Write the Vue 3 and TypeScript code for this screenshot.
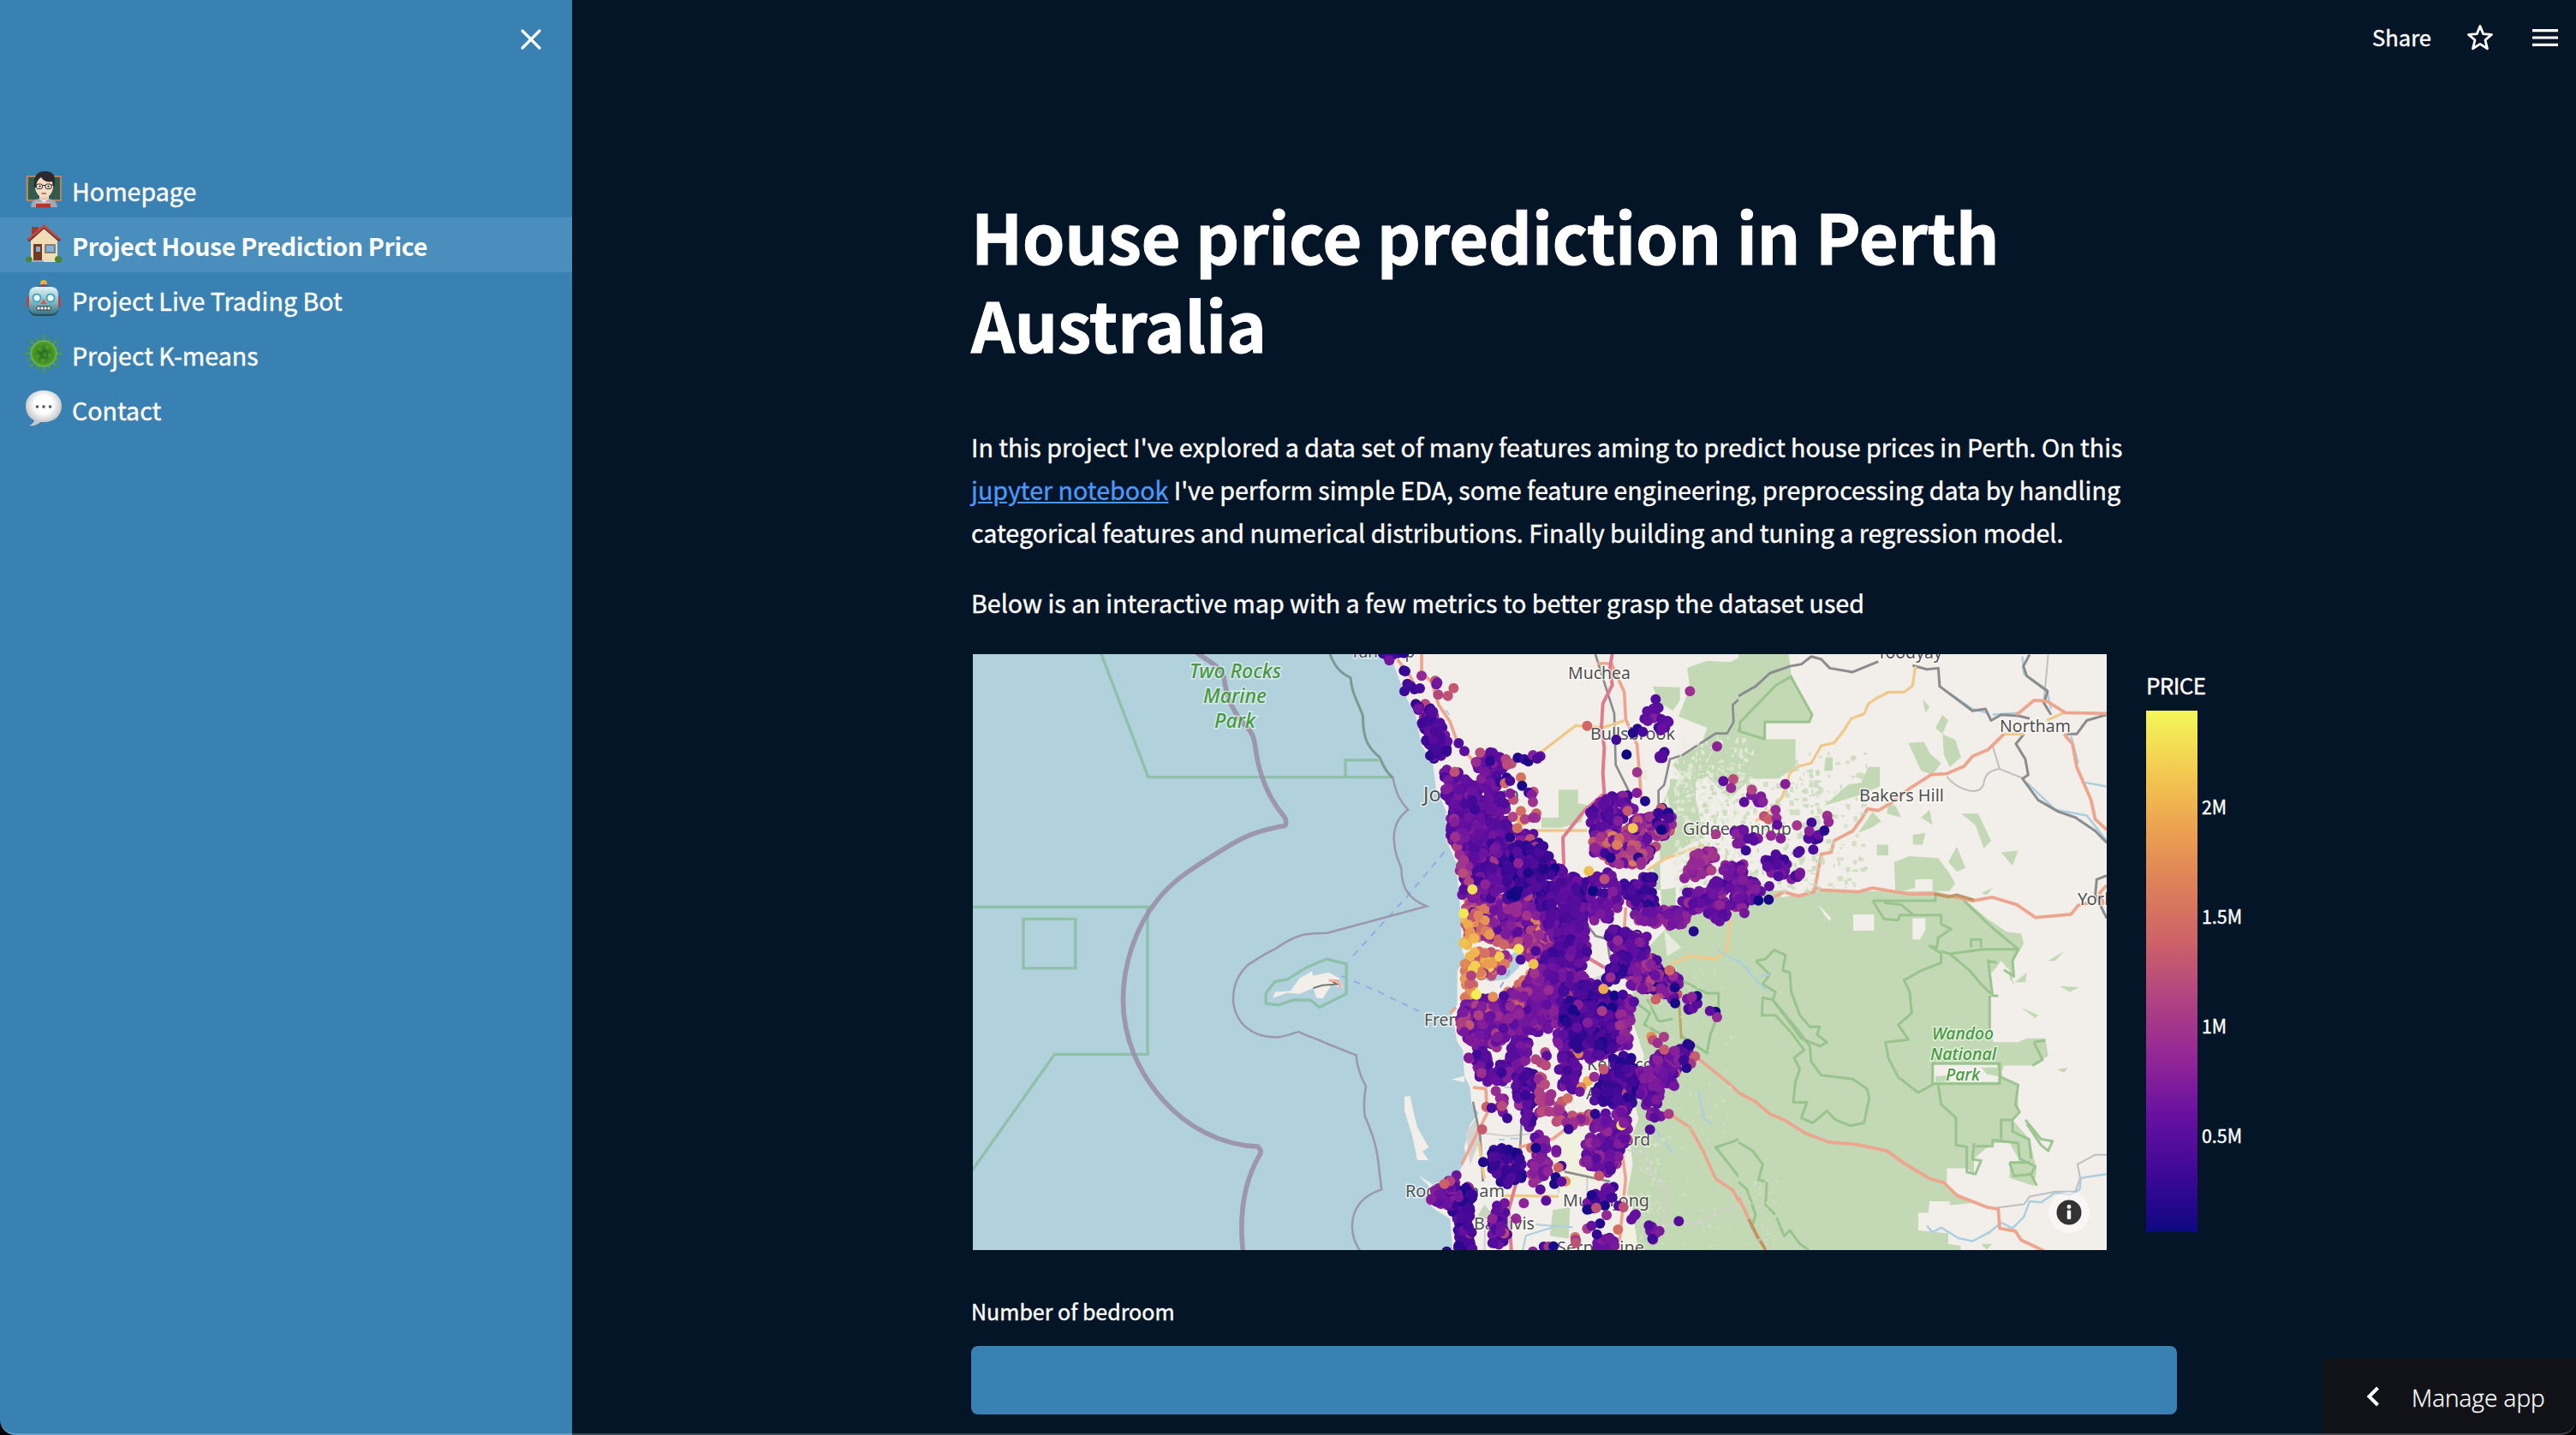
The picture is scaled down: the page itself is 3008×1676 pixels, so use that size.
<script setup lang="ts">
type Pt = [number, number]
type Rgb = [number, number, number]
interface Area { pts: Pt[]; price: number; spread?: number; density?: number }
interface Dot { x: number; y: number; c: string }
interface Label { t: string; x: number; y: number; w: number; s: number; park?: boolean }

const navItems = [
  { label: 'Homepage', icon: 'teacher' },
  { label: 'Project House Prediction Price', icon: 'house', active: true },
  { label: 'Project Live Trading Bot', icon: 'robot' },
  { label: 'Project K-means', icon: 'microbe' },
  { label: 'Contact', icon: 'speech' },
]

const plasma: Rgb[] = [
  [13, 8, 130], [62, 8, 150], [102, 16, 160], [146, 38, 150], [176, 66, 130],
  [204, 98, 104], [222, 128, 90], [236, 163, 80], [243, 204, 80], [243, 248, 88],
]
const shade = (v: number): string => {
  const t = Math.max(0, Math.min(0.999, v)) * 9
  const i = Math.floor(t)
  const f = t - i
  const a = plasma[i]
  const b = plasma[i + 1]
  return `rgb(${a.map((n, k) => Math.round(n + (b[k] - n) * f)).join(',')})`
}
const stops = plasma.map((c, i) => ({ o: i / (plasma.length - 1), c: `rgb(${c.join(',')})` }))

let seed = 20231
const rnd = () => {
  seed = (seed * 1664525 + 1013904223) % 4294967296
  return seed / 4294967296
}
const inside = (x: number, y: number, p: Pt[]) => {
  let r = false
  for (let i = 0, j = p.length - 1; i < p.length; j = i++) {
    if (p[i][1] > y !== p[j][1] > y && x < ((p[j][0] - p[i][0]) * (y - p[i][1])) / (p[j][1] - p[i][1]) + p[i][0]) r = !r
  }
  return r
}

// Suburb clusters, in thirds of a pixel from the grid origin (1560, 760)
const areas: Area[] = [
  { price: 0.15, pts: [[275, 185], [330, 188], [365, 240], [393, 300], [395, 365], [350, 380], [325, 360], [308, 310], [300, 250]] },
  { price: 0.62, spread: 0.5, density: 190, pts: [[452, 1100], [480, 1050], [590, 1060], [602, 1085], [570, 1120], [545, 1160], [520, 1140], [480, 1130], [490, 1210], [450, 1220], [446, 1150]] },
  { price: 0.6, spread: 0.5, density: 400, pts: [[590, 1190], [650, 1160], [700, 1090], [720, 1140], [680, 1240], [620, 1240]] },
  { price: 0.46, spread: 0.42, density: 170, pts: [[452, 860], [560, 870], [700, 850], [745, 940], [740, 985], [680, 1020], [600, 1030], [500, 1010], [455, 1010]] },
  { price: 0.7, spread: 0.35, density: 500, pts: [[447, 900], [520, 920], [540, 1010], [500, 1010], [452, 1040]] },
  { price: 0.28, spread: 0.2, density: 450, pts: [[520, 860], [740, 850], [745, 980], [600, 1000]] },
  { price: 0.4, spread: 0.3, density: 200, pts: [[680, 1000], [740, 960], [790, 1040], [700, 1110], [660, 1060]] },
  { price: 0.2, pts: [[375, 420], [430, 420], [455, 450], [482, 440], [500, 480], [515, 500], [500, 440], [490, 400], [515, 360], [565, 360], [595, 395], [565, 440], [570, 500], [603, 545], [600, 600], [620, 640], [690, 640], [712, 700], [795, 755], [798, 785], [705, 790], [700, 850], [640, 870], [450, 870], [440, 740], [402, 670], [403, 600], [403, 540], [372, 480]] },
  { price: 0.34, spread: 0.28, density: 900, pts: [[400, 560], [450, 700], [560, 860], [440, 860], [435, 740], [400, 665]] },
  { price: 0.1, density: 420, pts: [[600, 700], [700, 660], [790, 770], [700, 820], [620, 880], [580, 800]] },
  { price: 0.17, pts: [[700, 830], [740, 825], [810, 790], [880, 790], [930, 830], [880, 870], [870, 940], [880, 1030], [870, 1100], [800, 1160], [720, 1130], [690, 1110], [720, 1060], [780, 1030], [740, 960], [720, 900]] },
  { price: 0.25, density: 170, pts: [[445, 1240], [500, 1235], [600, 1225], [655, 1190], [690, 1110], [760, 1110], [880, 1140], [925, 1200], [1025, 1230], [1022, 1300], [1030, 1380], [980, 1400], [935, 1420], [870, 1430], [800, 1400], [765, 1350], [820, 1310], [770, 1320], [720, 1350], [690, 1345], [630, 1345], [600, 1355], [570, 1390], [490, 1390], [445, 1350], [433, 1300]] },
  { price: 0.13, density: 300, pts: [[780, 1170], [900, 1150], [1000, 1250], [1020, 1370], [930, 1420], [800, 1380]] },
  { price: 0.33, spread: 0.24, density: 900, pts: [[445, 1240], [760, 1150], [740, 1300], [480, 1300], [450, 1360], [433, 1300]] },
  { price: 0.2, pts: [[462, 1410], [510, 1400], [550, 1440], [600, 1440], [615, 1370], [640, 1345], [685, 1380], [665, 1450], [630, 1480], [590, 1510], [530, 1510], [480, 1485]] },
  { price: 0.16, pts: [[635, 1460], [700, 1480], [715, 1560], [690, 1600], [695, 1670], [665, 1670], [660, 1600], [635, 1610], [630, 1500]] },
  { price: 0.42, spread: 0.25, density: 330, pts: [[710, 1480], [760, 1550], [735, 1600], [790, 1570], [800, 1620], [900, 1620], [900, 1670], [830, 1670], [740, 1640], [715, 1680]] },
  { price: 0.18, pts: [[790, 1410], [850, 1430], [840, 1500], [865, 1540], [790, 1530], [775, 1450]] },
  { price: 0.12, density: 170, pts: [[960, 1430], [1030, 1410], [1050, 1480], [1060, 1550], [1020, 1610], [960, 1600], [930, 1570], [895, 1575], [930, 1500]] },
  { price: 0.24, density: 180, pts: [[920, 1630], [1020, 1600], [1025, 1680], [1015, 1740], [965, 1830], [910, 1810], [865, 1800], [880, 1720]] },
  { price: 0.24, density: 230, pts: [[1060, 1460], [1140, 1410], [1190, 1390], [1240, 1380], [1240, 1430], [1200, 1450], [1190, 1530], [1130, 1510], [1135, 1580], [1140, 1635], [1110, 1640], [1070, 1580]] },
  { price: 0.25, spread: 0.3, pts: [[995, 1060], [1095, 1050], [1140, 1110], [1200, 1130], [1215, 1170], [1185, 1225], [1140, 1200], [1070, 1190], [1035, 1170]] },
  { price: 0.2, pts: [[960, 975], [1020, 985], [1090, 1000], [1105, 1050], [1070, 1075], [1000, 1070], [950, 1010]] },
  { price: 0.12, pts: [[960, 1110], [985, 1060], [1020, 1070], [1015, 1150], [940, 1160]] },
  { price: 0.3, density: 450, pts: [[985, 1220], [1040, 1220], [1025, 1370], [1000, 1370]] },
  { price: 0.2, pts: [[890, 560], [935, 515], [980, 505], [1030, 510], [1045, 550], [1000, 600], [1000, 650], [900, 650], [885, 610]] },
  { price: 0.36, spread: 0.42, pts: [[1050, 580], [1100, 580], [1145, 545], [1178, 570], [1180, 625], [1135, 660], [1095, 720], [1080, 755], [1000, 750], [955, 745], [900, 710], [900, 645], [1000, 640]] },
  { price: 0.16, density: 600, pts: [[1140, 540], [1180, 570], [1180, 625], [1130, 660], [1110, 600]] },
  { price: 0.14, pts: [[1010, 810], [1060, 790], [1110, 790], [1110, 840], [1130, 900], [1110, 940], [1045, 910], [1010, 860]] },
  { price: 0.27, pts: [[1035, 930], [1120, 900], [1190, 905], [1240, 930], [1215, 965], [1165, 970], [1090, 960]] },
  { price: 0.22, density: 280, pts: [[895, 800], [915, 770], [970, 780], [990, 830], [990, 910], [950, 945], [900, 940], [875, 880]] },
  { price: 0.24, density: 240, pts: [[1210, 840], [1260, 845], [1310, 830], [1350, 770], [1370, 745], [1430, 745], [1440, 800], [1500, 825], [1470, 870], [1435, 920], [1400, 900], [1340, 960], [1300, 915], [1220, 905]] },
  { price: 0.2, density: 300, pts: [[1490, 730], [1570, 705], [1590, 780], [1660, 765], [1600, 800], [1560, 800], [1510, 760]] },
  { price: 0.34, density: 320, pts: [[1240, 705], [1330, 695], [1340, 720], [1300, 790], [1220, 800], [1210, 770], [1250, 740]] },
  { price: 0.24, density: 380, pts: [[1395, 620], [1450, 610], [1480, 660], [1440, 690], [1380, 660]] },
  { price: 0.13, density: 150, pts: [[400, 1870], [430, 1880], [475, 1880], [478, 1930], [470, 2000], [478, 2110], [425, 2110], [425, 2000], [390, 1940]] },
  { price: 0.24, pts: [[340, 1880], [420, 1845], [430, 1920], [395, 1950], [335, 1945]] },
  { price: 0.09, density: 160, pts: [[542, 1750], [615, 1745], [660, 1775], [655, 1850], [595, 1870], [548, 1840]] },
  { price: 0.27, density: 280, pts: [[700, 1690], [740, 1710], [740, 1830], [715, 1870], [670, 1850], [690, 1760]] },
  { price: 0.18, density: 300, pts: [[560, 1940], [600, 1935], [585, 2010], [615, 2050], [570, 2090], [540, 2080], [540, 2020]] },
  { price: 0.22, density: 300, pts: [[1075, 240], [1120, 180], [1150, 230], [1175, 255], [1150, 300], [1120, 250]] },
  { price: 0.18, density: 250, pts: [[1125, 365], [1160, 345], [1160, 380], [1140, 395]] },
  { price: 0.2, density: 420, pts: [[870, 1940], [930, 1870], [980, 1880], [950, 1960], [870, 1955]] },
  { price: 0.24, density: 320, pts: [[900, 2090], [950, 2040], [990, 2045], [985, 2085], [940, 2105]] },
  { price: 0.22, density: 320, pts: [[1090, 2000], [1140, 2025], [1110, 2065], [1090, 2045]] },
  { price: 0.2, density: 320, pts: [[1230, 1210], [1290, 1230], [1250, 1270], [1220, 1250]] },
  { price: 0.28, density: 350, pts: [[560, 1570], [590, 1560], [600, 1640], [570, 1620]] },
  { price: 0.17, density: 320, pts: [[1650, 650], [1700, 640], [1690, 665], [1600, 660]] },
  { price: 0.22, density: 320, pts: [[1440, 510], [1500, 505], [1500, 535], [1450, 525]] },
]
// x, y, price
const singles: [number, number, number][] = [
  [165, 10, 0.08], [180, 18, 0.15], [200, 14, 0.13], [218, 8, 0.1], [187, 34, 0.25], [238, 8, 0.06], [238, 70, 0.05], [243, 72, 0.1], [300, 88, 0.34],
  [348, 105, 0.52], [352, 118, 0.22], [355, 112, 0.25], [412, 131, 0.52], [358, 154, 0.46], [392, 158, 0.5], [240, 142, 0.1],
  [250, 116, 0.12], [262, 124, 0.14], [275, 135, 0.1], [294, 132, 0.14], [430, 324, 0.16], [450, 352, 0.2], [490, 390, 0.36],
  [540, 386, 0.08], [575, 375, 0.2], [595, 380, 0.45], [615, 395, 0.5], [600, 400, 0.48], [637, 375, 0.05], [660, 380, 0.1], [674, 388, 0.03],
  [690, 366, 0.3], [716, 370, 0.2], [705, 378, 0.15], [575, 460, 0.1], [598, 445, 0.08], [592, 464, 0.58], [610, 456, 0.14],
  [648, 444, 0.62], [652, 473, 0.03], [692, 494, 0.5], [675, 497, 0.12], [686, 505, 0.3], [622, 522, 0.5], [610, 500, 0.3], [690, 530, 0.38],
  [702, 570, 0.55], [700, 585, 0.4], [648, 562, 0.6], [620, 582, 0.45], [652, 595, 0.82], [662, 590, 0.45], [690, 585, 0.36],
  [635, 622, 0.6], [610, 654, 0.06], [505, 357, 0.48], [880, 263, 0.58], [1240, 142, 0.37], [1335, 335, 0.32],
  [1357, 457, 0.2], [1392, 450, 0.48], [1384, 481, 0.34], [1018, 364, 0.0], [1055, 426, 0.38], [1054, 498, 0.3],
  [1083, 527, 0.04], [982, 312, 0.12], [1040, 288, 0.06], [1056, 274, 0.06], [1075, 284, 0.14], [1090, 212, 0.2],
  [1120, 170, 0.17], [1130, 200, 0.19], [1165, 250, 0.2], [1331, 643, 0.42], [1253, 983, 0.05], [1040, 622, 0.88], [984, 680, 0.66],
  [962, 725, 0.05], [1140, 628, 0.0], [900, 842, 0.0], [640, 1045, 0.95], [447, 920, 0.96], [448, 1025, 0.86],
  [478, 836, 0.94], [886, 772, 0.85], [1574, 467, 0.3], [1457, 487, 0.45], [1540, 558, 0.34],
  [1500, 580, 0.5], [1515, 590, 0.55], [1543, 587, 0.35], [1546, 610, 0.2], [1524, 648, 0.34], [1558, 658, 0.3],
  [1615, 612, 0.4], [1666, 602, 0.12], [1658, 632, 0.3], [1721, 578, 0.37], [1726, 600, 0.34], [1711, 630, 0.06],
  [1672, 697, 0.15], [1625, 702, 0.16], [1618, 708, 0.15], [1516, 872, 0.02], [1480, 875, 0.01], [1518, 825, 0.2],
  [1626, 778, 0.28], [1625, 785, 0.26], [1430, 530, 0.2], [1436, 700, 0.1],
  [1168, 1120, 0.58], [1120, 1222, 0.55], [1188, 1235, 0.02], [1187, 1180, 0.03], [1265, 1210, 0.02], [1247, 1213, 0.32], [1330, 1265, 0.02],
  [1335, 1284, 0.34], [1310, 1262, 0.2], [975, 1208, 0.01], [1005, 1205, 0.12], [1044, 1230, 0.17], [937, 1185, 0.8],
  [1105, 1352, 0.72], [1110, 1364, 0.5], [1127, 1375, 0.36], [1149, 1353, 0.42], [1150, 1398, 0.52], [1232, 1378, 0.05],
  [1240, 1383, 0.06], [1258, 1421, 0.54], [1244, 1447, 0.4], [1228, 1462, 0.05], [1218, 1435, 0.1], [1166, 1623, 0.42], [1100, 1678, 0.17],
  [1185, 1525, 0.26], [733, 1407, 0.45], [738, 1420, 0.2], [718, 1443, 0.45], [735, 1453, 0.48], [700, 1432, 0.45],
  [882, 1508, 0.82], [860, 1530, 0.65], [812, 1568, 0.6], [854, 1545, 0.25], [905, 1493, 0.35], [938, 1467, 0.52],
  [560, 1543, 0.35], [575, 1568, 0.34], [582, 1595, 0.48], [527, 1598, 0.55], [545, 1602, 0.14], [600, 1638, 0.1],
  [512, 1677, 0.53], [1000, 1663, 0.97], [1008, 1655, 0.3], [908, 1623, 0.06], [815, 1676, 0.1], [684, 1742, 0.6], [700, 1742, 0.02],
  [772, 1758, 0.3], [772, 1750, 0.26], [516, 1792, 0.04], [790, 1805, 0.14], [779, 1811, 0.55], [770, 1845, 0.02],
  [765, 1868, 0.03], [804, 1859, 0.72], [790, 1860, 0.2], [716, 1888, 0.18], [736, 1927, 0.2], [658, 1936, 0.32],
  [631, 1990, 0.34], [548, 1990, 0.32], [922, 1840, 0.52], [896, 1908, 0.04], [880, 1958, 0.02], [942, 1944, 0.02],
  [990, 1945, 0.15], [1007, 1950, 0.5], [912, 1952, 0.5], [948, 1978, 0.34], [1045, 1980, 0.25], [1035, 1993, 0.22],
  [1050, 1975, 0.22], [1201, 1999, 0.18], [925, 2007, 0.06], [880, 2025, 0.42], [895, 2015, 0.22], [914, 2045, 0.08],
  [988, 2028, 0.6], [838, 2055, 0.6], [840, 2065, 0.4], [840, 2075, 0.5], [728, 2088, 0.15], [745, 2088, 0.4],
  [762, 2087, 0.02], [690, 2105, 0.32], [388, 2105, 0.06], [422, 1838, 0.24], [400, 1858, 0.45], [380, 1868, 0.55],
  [647, 1082, 0.15], [700, 1052, 0.14], [692, 1098, 0.85], [580, 1120, 0.3], [492, 1205, 0.98], [550, 1213, 0.72],
  [522, 1060, 0.62], [932, 1262, 0.42],
]
const dots: Dot[] = []
for (const a of areas) {
  const xs = a.pts.map((p) => p[0])
  const ys = a.pts.map((p) => p[1])
  const x0 = Math.min(...xs)
  const x1 = Math.max(...xs)
  const y0 = Math.min(...ys)
  const y1 = Math.max(...ys)
  const tries = Math.round((((x1 - x0) * (y1 - y0)) / (a.density ?? 190)) * 1.25)
  for (let i = 0; i < tries; i++) {
    const x = x0 + rnd() * (x1 - x0)
    const y = y0 + rnd() * (y1 - y0)
    if (!inside(x, y, a.pts)) continue
    const n = (rnd() + rnd() + rnd()) / 1.5 - 1
    const outlier = rnd() < 0.025 ? rnd() * 0.35 : 0
    dots.push({ x: x + (rnd() - 0.5) * 10, y: y + (rnd() - 0.5) * 10, c: shade(a.price + n * (a.spread ?? 0.14) + outlier) })
  }
}
for (const [x, y, p] of singles) dots.push({ x, y, c: shade(p) })

// Scrub texture of the hills
const specks: { x: number; y: number; w: number; h: number; c: string }[] = []
const speckle = (x0: number, y0: number, x1: number, y1: number, n: number, c: string, m: number) => {
  for (let i = 0; i < n; i++) {
    specks.push({ x: x0 + rnd() * (x1 - x0), y: y0 + rnd() * (y1 - y0), w: 3 + rnd() * m, h: 3 + rnd() * m, c })
  }
}
speckle(1190, 300, 1460, 560, 200, '#e9ecdd', 12)
speckle(1180, 400, 1420, 850, 300, '#e2e9d4', 14)
speckle(1200, 450, 1700, 850, 320, '#c5dab8', 18)
speckle(1600, 350, 1860, 830, 120, '#c5dab8', 18)
speckle(1080, 1100, 1380, 2090, 200, '#cfdfc2', 9)
speckle(1420, 1850, 1560, 2090, 50, '#d2e0c5', 9)
speckle(1060, 1700, 1150, 2080, 70, '#d6e2c9', 10)

const labels: Label[] = [
  { t: 'Yanchep', x: 1577, y: 768, w: 75, s: 20 },
  { t: 'Muchea', x: 1831, y: 793, w: 73, s: 20 },
  { t: 'Bullsbrook', x: 1857, y: 864, w: 99, s: 20 },
  { t: 'Joondalup', x: 1662, y: 936, w: 112, s: 24 },
  { t: 'Gidgegannup', x: 1965, y: 975, w: 127, s: 20 },
  { t: 'Bakers Hill', x: 2171, y: 936, w: 99, s: 20 },
  { t: 'Northam', x: 2335, y: 855, w: 83, s: 20 },
  { t: 'Toodyay', x: 2192, y: 769, w: 76, s: 20 },
  { t: 'York', x: 2426, y: 1057, w: 42, s: 20 },
  { t: 'Perth', x: 1778, y: 1115, w: 60, s: 25 },
  { t: 'Fremantle', x: 1663, y: 1198, w: 92, s: 20 },
  { t: 'Kelmscott', x: 1853, y: 1250, w: 92, s: 20 },
  { t: 'Armadale', x: 1852, y: 1284, w: 90, s: 20 },
  { t: 'Byford', x: 1867, y: 1338, w: 60, s: 20 },
  { t: 'Rockingham', x: 1641, y: 1398, w: 116, s: 20 },
  { t: 'Baldivis', x: 1721, y: 1436, w: 71, s: 20 },
  { t: 'Mundijong', x: 1825, y: 1409, w: 101, s: 20 },
  { t: 'Serpentine', x: 1818, y: 1464, w: 102, s: 20 },
  { t: 'Two Rocks', x: 1389, y: 792, w: 107, s: 23, park: true },
  { t: 'Marine', x: 1405, y: 821, w: 74, s: 23, park: true },
  { t: 'Park', x: 1418, y: 850, w: 48, s: 23, park: true },
  { t: 'Wandoo', x: 2256, y: 1214, w: 72, s: 19, park: true },
  { t: 'National', x: 2254, y: 1238, w: 77, s: 19, park: true },
  { t: 'Park', x: 2272, y: 1262, w: 40, s: 19, park: true },
]
const ticks = [
  { t: '2M', y: 951, w: 29 }, { t: '1.5M', y: 1079, w: 47 }, { t: '1M', y: 1207, w: 29 }, { t: '0.5M', y: 1335, w: 47 },
]
const spikes = Array.from({ length: 16 }, (_, i) => {
  const a = (i * Math.PI) / 8
  const r = i % 2 ? 18.5 : 21
  return { x: 22 + Math.cos(a) * r, y: 22 + Math.sin(a) * r, ix: 22 + Math.cos(a) * 14, iy: 22 + Math.sin(a) * 14 }
})
</script>

<template>
  <div class="app">
    <aside class="sidebar">
      <div class="side-head">
        <svg width="26" height="26" viewBox="0 0 26 26"><path d="M3 3 23 23M23 3 3 23" stroke="#fff" stroke-width="3.200" stroke-linecap="round" /></svg>
      </div>
      <nav>
        <a v-for="n in navItems" :key="n.label" class="nav-item" :class="{ active: n.active }">
          <svg class="emoji" width="44" height="44" viewBox="0 0 44 44">
            <g v-if="n.icon === 'teacher'">
              <rect x="1.500" y="6" width="41.500" height="30" fill="#b0865f" />
              <rect x="4" y="8" width="37" height="26" fill="#315b4c" />
              <path d="M7 43Q7 34 17 33H28Q37 34 38 43Z" fill="#a5a8ae" />
              <path d="M17 33 22 38 28 33V29H17Z" fill="#e9edf1" />
              <path d="M18 27H27V33Q22 37 18 33Z" fill="#e9c4a4" />
              <path d="M12 12Q12 5 22 4Q33 5 33 13V21Q31 31 22.500 32Q14 31 12 21Z" fill="#f4dcc5" />
              <path d="M11 20Q9 2 22 1Q36 0 35 13L34 20Q32 17 32 13Q23 15 19 8Q13 12 13 20Z" fill="#2b2a2c" />
              <g fill="#f8f2e8" stroke="#292321" stroke-width="1"><rect x="13.500" y="16" width="7" height="5.500" rx="2" /><rect x="24" y="16" width="7" height="5.500" rx="2" /></g>
              <path d="M20.500 17.500H24M11 17H13.500M31 17H34" stroke="#292321" />
              <circle cx="17.500" cy="18.800" r="1.300" fill="#5a4436" /><circle cx="27.500" cy="18.800" r="1.300" fill="#5a4436" />
              <path d="M19.500 27H25" stroke="#a3685a" stroke-width="1.600" />
              <rect x="13" y="38" width="17" height="5.500" fill="#b9322b" /><path d="M13 38H30" stroke="#e7e1da" />
            </g>
            <g v-else-if="n.icon === 'house'">
              <rect x="8" y="2" width="8" height="14" fill="#a93630" />
              <path d="M7 18 22 4 38 18V43H7Z" fill="#f0ddb6" />
              <path d="M4 18 22.500 2 41 18" fill="none" stroke="#6d2925" stroke-width="3.500" />
              <path d="M4 16.500 22.500 1 41 16.500" fill="none" stroke="#c64a3c" stroke-width="2.500" />
              <rect x="10" y="22" width="10" height="20" fill="#733a28" /><rect x="13" y="25" width="5" height="6" fill="#82abd7" />
              <rect x="24" y="23" width="11" height="9" fill="#82b1df" stroke="#7e6b60" stroke-width="1.600" />
              <path d="M8 42H22" stroke="#aaa" stroke-width="2" />
              <circle cx="5" cy="40" r="3.600" fill="#4b842f" /><circle cx="39" cy="40" r="4" fill="#4b842f" />
            </g>
            <g v-else-if="n.icon === 'robot'">
              <circle cx="22" cy="4" r="4" fill="#f2ae31" /><path d="M16 10Q16 5 22 5Q28 5 28 10Z" fill="#65518a" />
              <rect x="2" y="19" width="5" height="13" rx="2" fill="#b34845" /><rect x="37" y="19" width="5" height="13" rx="2" fill="#b34845" />
              <rect x="5" y="8" width="34" height="34" rx="8" fill="#254e5d" />
              <rect x="5" y="8" width="34" height="32" rx="8" fill="url(#botFace)" />
              <g fill="#eefcff" stroke="#45a2c4" stroke-width="2"><circle cx="14" cy="21" r="4.500" /><circle cx="30" cy="21" r="4.500" /></g>
              <path d="M22 22 25.500 28H18.500Z" fill="#d35a50" />
              <rect x="14" y="31" width="16" height="4" rx="1" fill="#fff" stroke="#263b42" /><path d="M18 31V35M22 31V35M26 31V35" stroke="#263b42" />
            </g>
            <g v-else-if="n.icon === 'microbe'">
              <g v-for="(s, i) in spikes" :key="i"><path :d="`M${s.ix} ${s.iy}L${s.x} ${s.y}`" stroke="#5aa82e" stroke-width="1.500" /><circle :cx="s.x" :cy="s.y" r="1.600" fill="#4f9c2b" /></g>
              <circle cx="22" cy="22" r="15.500" fill="#71b936" /><circle cx="22" cy="22" r="14" fill="url(#germ)" />
              <g fill="none" stroke="#69ad3a" stroke-width=".8"><circle cx="18" cy="17" r="1.700" /><circle cx="26" cy="15" r="1.400" /><circle cx="23" cy="23" r="1.700" /><circle cx="15" cy="25" r="1.400" /><circle cx="29" cy="24" r="1.500" /><circle cx="21" cy="30" r="1.400" /></g>
            </g>
            <g v-else>
              <path d="M22 1C9 1 1 9 1 19C1 27 5 33 11 36Q10 40 5 42Q13 43 18 38Q20 38 22 38C35 38 43 30 43 19C43 9 35 1 22 1Z" fill="url(#bubble)" />
              <g fill="#555"><circle cx="14.500" cy="20" r="1.800" /><circle cx="22" cy="20" r="1.800" /><circle cx="29.500" cy="20" r="1.800" /></g>
            </g>
          </svg>
          <span>{{ n.label }}</span>
        </a>
      </nav>
      <svg class="defs" width="0" height="0">
        <defs>
          <linearGradient id="botFace" x2="0" y2="1"><stop stop-color="#e0f4f5" /><stop offset=".5" stop-color="#8ebfc8" /><stop offset="1" stop-color="#397584" /></linearGradient>
          <radialGradient id="germ"><stop stop-color="#21671d" /><stop offset="1" stop-color="#52a02b" /></radialGradient>
          <radialGradient id="bubble" cy=".4"><stop offset=".5" stop-color="#fff" /><stop offset="1" stop-color="#c9cacd" /></radialGradient>
        </defs>
      </svg>
    </aside>

    <main class="main">
      <header class="toolbar">
        <span class="share">Share</span>
        <svg class="star" width="32" height="32" viewBox="0 0 32 32"><path d="M16 2.500 19.700 11.600 29.500 12.400 22 18.800 24.500 28.800 16 23.400 7.500 28.800 10 18.800 2.500 12.400 12.300 11.600Z" fill="none" stroke="#fff" stroke-width="2.800" stroke-linejoin="round" /></svg>
        <svg class="burger" width="30" height="20" viewBox="0 0 30 20"><path d="M0 1.700H30M0 10H30M0 18.300H30" stroke="#fff" stroke-width="3.200" /></svg>
      </header>

      <article class="content">
        <h1>House price prediction in Perth<br />Australia</h1>
        <p>In this project I've explored a data set of many features aming to predict house prices in Perth. On this<br /><a>jupyter notebook</a> I've perform simple EDA, some feature engineering, preprocessing data by handling<br />categorical features and numerical distributions. Finally building and tuning a regression model.</p>
        <p>Below is an interactive map with a few metrics to better grasp the dataset used</p>

        <svg class="chart" width="1506" height="696" viewBox="1134 764 1506 696">
          <defs>
            <clipPath id="mapClip"><rect x="1136" y="764" width="1324" height="696" /></clipPath>
            <linearGradient id="scale" x1="0" y1="1" x2="0" y2="0"><stop v-for="s in stops" :key="s.o" :offset="s.o" :stop-color="s.c" /></linearGradient>
          </defs>
          <g clip-path="url(#mapClip)">
            <rect x="1136" y="764" width="1324" height="696" fill="#f2efea" />
            <!-- coast and central plain -->
            <g transform="translate(1560 760) scale(.33333)" fill="none" stroke-linejoin="round">
              <path fill="#b1d2dd" d="M-1300 0H185L210 70 240 150 280 230 300 330 340 400 350 480 385 560V660L420 740 435 900 442 1050 455 1080 425 1120V1240L405 1270 425 1370 445 1400 450 1490 470 1530 475 1590 500 1620 470 1660 450 1740 455 1780 430 1830 400 1860 330 1880 315 1930 350 1960 400 1990 410 2110H-1300Z" />
              <path fill="#b1d2dd" d="M480 1130 540 1160 600 1150 640 1110 660 1060 720 1050 700 1010 640 1040 590 1090 500 1120ZM380 205l12 5 10 20-12-8Z" />
              <path fill="#f2efea" d="M240 1562 260 1560 268 1600 285 1670 325 1740 303 1755 325 1785 285 1785 270 1710 240 1610ZM290 1840 340 1870 330 1880ZM405 1502 450 1490V1512Z" />
              <path fill="#f1f2dd" d="M800 1690H900V1850L780 1900 720 1870ZM1010 2000 1070 2000 1060 2110H1000Z" />
              <path fill="#d3d4d2" stroke="#d8d8d6" d="M455 1690 490 1640 510 1700 470 1800ZM720 790h30v20h-30ZM880 1160l60-30 10 30Z" />
              <g fill="#c3d9b5">
                <path d="M780 487H848V535L880 540 860 600 790 620H720V585H780ZM1110 125 1205 128V175L1180 210 1130 180ZM1230 60 1300 35 1380 40 1445 10V300L1480 420 1380 520 1300 440 1240 470 1180 400 1195 380 1280 330 1300 270 1200 230 1240 130ZM1130 570 1180 450 1260 520 1290 650 1200 700 1110 760 1120 840 1190 830V900H1140ZM1170 450H1260V560H1170Z" />
                <path d="M1040 1100 1120 1010 1150 980 1280 900 1460 840H1560V2110H1060L1040 1960 1020 1900 1040 1800 1030 1720 1060 1640 1040 1560 1080 1420 1040 1300ZM760 1960 820 1950 815 2060 750 2050ZM520 1940 560 1990 490 1990Z" />
              </g>
              <path fill="#e6ecd9" d="M1160 500 1180 590 1140 600ZM1060 420h30v30h-20ZM1150 980l60 60-50 30Z" />
              <g stroke="#d3cfcf" stroke-width="6"><path d="M510 1690 600 1700 720 1690M880 1840V1920M780 1830V1900M1020 1750 1090 1760 1105 1830 1160 1900 1150 1980 1140 2010 1280 2005 1330 1970 1420 1940M520 2100 525 1960" /></g>
              <g stroke="#8b8c8e" stroke-width="8">
                <path d="M905 0 930 80 975 220 980 400 1030 500M1450 135 1390 190 1393 250 1370 290 1330 290 1215 365 1170 380 1150 470 1130 490V580L1080 640M880 960 910 1000 950 1010 960 1080M480 1580 505 1700 515 1860M650 1650 645 1750M800 1825 960 1860" />
              </g>
              <g stroke="#f0c98a" stroke-width="10">
                <path d="M710 362 840 262 880 266 940 268 1010 245M700 630H880M1090 770 1150 730 1290 680M580 1910 650 1910 780 1912M1380 940 1370 1050 1330 1080 1240 1070 1170 1100M520 1850 500 1720M540 900 580 940" />
              </g>
              <g stroke="#eda58e" stroke-width="11">
                <path d="M215 30 260 90 280 130M300 10V75L335 110 360 190 400 250 425 320 480 385M915 45H965L1010 145 1015 240 1055 330 1070 520M480 1530 525 1535 530 1620 440 1800M640 1740 760 1710 800 1680M1000 1740 1015 1850 990 2100M890 1540 910 1590M1270 1430 1370 1510 1440 1575M1180 1630 1240 1670 1290 1760 1330 1850 1390 1890 1440 1980M1015 900 1010 980M400 1270 420 1250" />
              </g>
              <g stroke="#de7b8e" stroke-width="12"><path d="M968 10 960 60 968 120 935 185 930 270 940 340 935 430 940 500 870 560 795 655 798 750M630 1870 605 1960 615 2110M890 1080 940 1110M770 810 800 805" /></g>
              <g stroke="#accfdf" stroke-width="6"><path d="M700 2010 760 2015 830 2020M655 2100 665 2050 760 2020M590 1713H570M640 1709H610M1340 1050 1440 1110M1270 1540 1290 1640 1320 1660M1120 1680 1180 1760M590 1530H620M750 1180 700 1120" /></g>
              <g stroke="#97c48e" stroke-width="9"><path d="M1210 1155 1300 1200 1340 1200V1270L1310 1350 1300 1410 1210 1350M1060 1240 1100 1270 1080 1310 1150 1350M1090 1220 1130 1300 1180 1290M1440 210 1410 280 1440 290M1440 1700 1390 1720 1330 1740 1370 1790 1440 1880" /></g>
              <path d="M1200 1200 1210 1360" stroke="#b9a95e" stroke-width="9" />
              <path d="M380 705 250 860 45 1085M20 1140 150 1195 290 1263M610 1120 570 1190" stroke="#98abe0" stroke-width="6" stroke-dasharray="24 22" />
            </g>
            <!-- ocean boundaries -->
            <g transform="translate(1130 760) scale(.35714 .45281)" fill="none">
              <path fill="#f2efea" d="M998 896 1005 880 1055 878 1085 845 1125 827 1130 838 1180 830 1215 845 1228 870 1190 862 1160 898 1140 895 1130 870 1085 885 1045 882Z" />
              <g stroke="#8fc0aa" stroke-width="3.400">
                <path vector-effect="non-scaling-stroke" d="M435 5 590 326H1390M1235 326V282H1345M15 661H588V1041H284L15 1340M182 692H352V819H182ZM975 883 1005 853 1045 848 1105 818 1173 795 1238 808V885L1150 920 1120 901H1065L1015 914 975 910Z" />
              </g>
              <g stroke="#9a8ca8" stroke-opacity=".85">
                <path stroke-width="5.600" vector-effect="non-scaling-stroke" d="M740 0C790 30 835 40 840 80C850 130 880 170 910 195C950 225 930 245 960 320C980 370 1010 405 1035 428Q1045 440 1038 451C940 465 900 480 830 515C730 565 680 585 620 643C550 710 508 810 508 900C508 1000 560 1090 640 1160C720 1230 830 1275 948 1279Q963 1290 955 1300C910 1360 885 1440 900 1550" />
                <path stroke-width="2.500" vector-effect="non-scaling-stroke" d="M1390 326C1400 370 1415 390 1440 410C1405 430 1390 460 1394 490C1396 530 1410 540 1418 562C1418 610 1440 640 1500 659L1175 728C1110 728 1075 730 1010 767C960 785 940 800 920 808C880 835 868 865 868 900C872 960 930 997 1005 997C1035 997 1055 988 1083 983C1110 995 1135 998 1170 1012L1270 1043C1275 1085 1290 1105 1302 1123C1292 1165 1297 1180 1298 1200C1330 1255 1340 1290 1347 1350L1353 1390C1290 1405 1255 1440 1257 1490C1260 1520 1275 1540 1285 1550" />
              </g>
              <path stroke="#7d9990" stroke-width="3" vector-effect="non-scaling-stroke" d="M1183 5C1200 45 1225 60 1252 70C1255 110 1275 130 1292 168C1292 230 1310 250 1347 275C1360 300 1370 315 1390 328" />
              <path stroke="#777" stroke-width="2" vector-effect="non-scaling-stroke" d="M1130 870 1160 863 1208 860 1185 850" />
              <path stroke="#eaafa0" stroke-width="3" vector-effect="non-scaling-stroke" d="M1180 850 1212 852 1220 868" />
            </g>
            <!-- eastern hills -->
            <g transform="translate(2030 760) scale(.33333 .45281)" fill="none" stroke-linejoin="round">
              <g fill="#c3d9b5">
                <path d="M0 5H175L185 60 258 165 250 185H95V228H200V300L140 330H20L0 300Z" />
                <path d="M0 650 130 640 260 620H690L790 640 870 690 940 725 990 730 1000 755 980 780 960 800V860L1010 830 1005 855 960 855 930 825 885 830V900H880V985L895 1010H980L1010 1000H1075L1085 1045 1030 1070H930L915 1100 980 1120V1190L960 1210 1020 1260 1045 1340 1035 1380 950 1360V1318L985 1315 950 1270H890L825 1310V1350L800 1335H730V1380L815 1425 740 1430V1420H670L665 1450H630V1495L735 1503V1530L778 1535V1550H0Z" />
                <path d="M545 545 600 530 700 535 735 570 760 600 740 620H680V590H620V612L550 625ZM595 238 650 235 670 265 710 290 680 320 640 310 615 270ZM715 215 760 230 780 275 740 300 720 270ZM690 200 715 165 735 180 715 215ZM645 125 670 145 655 160ZM455 300H495V350L415 375 300 400 385 345 430 340ZM485 500H525V528H485ZM610 475 655 470 645 500H612ZM420 470 470 415 500 440 470 455ZM735 545 765 505 795 560 765 570ZM640 430 670 410 680 450ZM780 420 840 420 885 490 860 510 830 450ZM920 520 980 515 960 555ZM305 275H330V310H300ZM525 395 550 400 570 430 520 420ZM850 625 890 612 870 630ZM1085 800 1140 775 1110 800ZM1125 865 1195 868 1160 880ZM990 920 1050 940 1040 948ZM1115 1080 1155 1075 1140 1088ZM850 1530H890L870 1545Z" />
              </g>
              <path fill="#f2efea" d="M402 680H475V722H402ZM610 690H655V720L635 745H610ZM890 830 920 800 950 825 950 850 900 870ZM685 1065H910V1112H685ZM280 655 325 690 320 698 300 680ZM620 590H678V614H620Z" />
              <path fill="#c3d9b5" d="M850 1075H910V1098L870 1092ZM690 1098 740 1095V1112H690Z" />
              <g stroke="#95c18a" stroke-opacity=".9" stroke-width="3">
                <path vector-effect="non-scaling-stroke" d="M5 185 130 90 183 67 258 165 248 184H92V228L5 208ZM470 645H690V630M470 645 510 692 560 695 565 682H710V705L745 718 700 740 695 765 670 762 710 780V805L640 825 580 850 600 880 607 935 560 965 595 1003 515 1010 525 1050 560 1100 630 1140 685 1117H915V1065H680V1117M790 645 840 680 890 715 980 770H860L740 782 710 775M740 782 810 825 850 860 885 885M815 765V745H850V765M980 770 960 800 965 840 930 823M880 830 875 800 905 805M880 830 890 890 910 890M700 1120 710 1170 762 1205V1275L800 1280V1345L830 1350 850 1315 820 1312 825 1270M830 1278H890V1262L980 1270 985 1310 1040 1330 1025 1350 1045 1380M920 1260V1210H960V1240L1018 1260 1025 1310M950 1320 965 1355 1025 1350M950 1320H1020M910 1065 920 1100 980 1120 970 1170 985 1190 960 1210M510 650 570 655 610 680M880 890V980M1035 1010 1065 1055 1030 1070M1035 1010 1075 1005M1005 1210 1060 1260 1100 1265 1085 1290 1060 1275 1010 1220" />
                <path vector-effect="non-scaling-stroke" d="M60 800 95 795 125 772 165 785 155 825 180 830 185 880 215 940 250 970 285 970 275 990 310 1010 285 1020 220 1000 180 960 120 900 130 880 85 860 110 835 60 800M85 895 120 900 165 940 215 985 250 1020 255 1060 290 1095 400 1105 450 1130 458 1155 440 1218 390 1225 340 1210 310 1187 260 1218 220 1205 240 1165H192L200 1110 215 1080 195 1050 230 1030 185 985 130 940H82ZM0 1268 50 1290 85 1325 70 1365 100 1370 95 1430 130 1455 160 1510 180 1495 215 1530 245 1545M0 1370 30 1390 60 1455 45 1490" />
              </g>
              <path stroke="#accfdf" stroke-width="2.500" vector-effect="non-scaling-stroke" d="M0 798 100 880M995 15 1000 60 1080 100 1095 150M1165 220 1190 290M1215 340 1290 350M700 90 820 150 870 160M890 165 980 160M1010 340 1110 410 1220 425 1290 490M660 1483 680 1500 710 1488 770 1515 820 1523 880 1500 920 1475 960 1490 1000 1460 1020 1420 1060 1423 1110 1398 1160 1403 1195 1390 1200 1360 1290 1350M75 840 110 835" />
              <path stroke="#bfbfc2" stroke-width="2" vector-effect="non-scaling-stroke" d="M730 325C770 360 850 380 860 340Q865 310 915 305L890 245M915 305 1000 330M900 1437 1000 1428 1020 1408 1110 1395 1180 1395 1197 1360 1188 1325 1250 1300H1290M1085 10 1070 130" />
              <path stroke="#8b8c8e" stroke-width="3" vector-effect="non-scaling-stroke" d="M0 117 60 92 110 58 180 40 220 35 255 15 290 22 320 45 400 55 490 28M610 38 660 48 700 45 705 92 820 155 865 150 885 180 920 165 980 168 1020 175M1020 10 998 40 1010 65 1083 105 1070 135 1095 165M1150 215 1185 215 1220 180 1290 165M1000 215 972 240 1005 280 1015 320 995 330 1050 385 1120 415 1180 430 1250 465 1290 495M1290 580 1255 590 1250 630 1290 690" />
              <path stroke="#f0c98a" stroke-width="3.200" vector-effect="non-scaling-stroke" d="M620 40 610 90 580 107 525 107 485 122 455 137 440 163 395 175 370 205 335 238 290 245 255 290 210 298 180 315 155 375 125 405 60 440M1140 160 1080 180M1000 215H930" />
              <path stroke="#eda58e" stroke-width="3.800" vector-effect="non-scaling-stroke" d="M125 635 160 622 210 633 265 622 275 585 290 525 325 520 335 490 400 465 430 435 452 408 490 412 540 390 600 355 675 320 730 317 790 298 820 272 875 255 930 215M975 165 1035 128 1080 130 1145 160 1290 162M1140 215 1170 240 1185 300 1235 385 1250 435 1290 462M265 610 290 617 420 622 470 612 600 628 680 627 760 635 820 645 890 636 975 655 1040 688 1165 680 1190 657 1230 650M0 1140 60 1163 110 1195 160 1210 235 1245 320 1268 410 1273 520 1290 580 1322 670 1362 720 1372 765 1405 870 1435 910 1440 915 1490 970 1497 990 1520 1070 1548M0 1410 60 1500 95 1545M1290 605 1265 625 1280 655" />
              <path stroke="#bf9562" stroke-width="3.500" vector-effect="non-scaling-stroke" d="M685 627 735 635 765 630 825 643M35 1465 65 1510 95 1545" />
            </g>
            <g transform="translate(1560 760) scale(.33333)">
              <rect v-for="(s, i) in specks" :key="i" :x="s.x" :y="s.y" :width="s.w" :height="s.h" :fill="s.c" rx="3" opacity=".75" />
            </g>
            <text v-for="(l, i) in labels" :key="i" class="place" :class="{ park: l.park }" :x="l.x" :y="l.y" :font-size="l.s" :textLength="l.w" lengthAdjust="spacingAndGlyphs">{{ l.t }}</text>
            <g transform="translate(1560 760) scale(.33333)">
              <circle v-for="(d, i) in dots" :key="i" :cx="d.x" :cy="d.y" r="18" :fill="d.c" />
            </g>
            <circle cx="2416" cy="1416" r="24" fill="#fff" fill-opacity=".5" />
            <circle cx="2416" cy="1416" r="14.500" fill="#333" />
            <circle cx="2416" cy="1409.500" r="2.400" fill="#fff" /><rect x="2413.800" y="1413.500" width="4.400" height="10.500" rx="1" fill="#fff" />
          </g>
          <text class="legend" x="2506" y="811" font-size="26" textLength="70">PRICE</text>
          <rect x="2506" y="830" width="60" height="609" fill="url(#scale)" />
          <text v-for="t in ticks" :key="t.t" class="legend" x="2571" :y="t.y" font-size="22.500" :textLength="t.w" lengthAdjust="spacingAndGlyphs">{{ t.t }}</text>
        </svg>

        <label class="field-label">Number of bedroom</label>
        <div class="field"></div>
      </article>
    </main>

    <div class="manage">
      <svg width="16" height="24" viewBox="0 0 16 24"><path d="M13.500 2 3.500 12 13.500 22" fill="none" stroke="#fff" stroke-width="4" /></svg>
      <span>Manage app</span>
    </div>
  </div>
</template>

<style>
html, body { margin: 0; background: #000; }
</style>
<style scoped>
.app { position: relative; display: flex; width: 3008px; height: 1676px; overflow: hidden; background: #041527; border-radius: 0 0 18px 18px; color: #fff; font-family: "Noto Sans CJK SC", "Noto Sans", sans-serif; }
.app::after { content: ""; position: absolute; inset: 0; border-bottom: 2px solid rgba(255, 255, 255, .22); border-radius: 0 0 18px 18px; pointer-events: none; }
.sidebar { flex: none; width: 668px; background: #3981b3; }
.side-head { display: flex; justify-content: flex-end; height: 157px; padding: 33px 35px 0 0; }
.nav-item { display: flex; align-items: center; height: 64px; padding-left: 29px; gap: 11px; font-size: 28.600px; line-height: 64px; white-space: nowrap; -webkit-text-stroke: .4px #fff; }
.nav-item.active { background: #4a8ebe; font-weight: 700; letter-spacing: -.4px; -webkit-text-stroke: 0; }
.emoji { flex: none; margin-top: -3px; overflow: visible; -webkit-text-stroke: 0; }
.nav-item span { position: relative; top: 1px; }
.defs { display: block; }
.main { flex: 1; min-width: 0; }
.toolbar { display: flex; justify-content: flex-end; align-items: center; height: 88px; padding-right: 21px; font-size: 25.600px; -webkit-text-stroke: .4px #fff; }
.share { margin-top: -3px; }
.star { margin-left: 41px; }
.burger { margin-left: 45px; }
.content { margin-left: 466px; padding-top: 135px; white-space: nowrap; }
h1 { margin: 0 0 67.400px; font-size: 79.600px; font-weight: 700; line-height: 103.300px; letter-spacing: -.4px; -webkit-text-stroke: .9px #fff; }
p { margin: 0 0 32px; font-size: 28.650px; line-height: 50px; -webkit-text-stroke: .4px; }
p a { color: #4d97f8; text-decoration: underline; }
.chart { display: block; margin-top: 35px; }
.place { font-family: "Noto Sans", sans-serif; fill: #505050; stroke: #fff; stroke-opacity: .7; stroke-width: 3px; paint-order: stroke; }
.place.park { font-style: italic; font-weight: 500; fill: #469a40; stroke-opacity: .55; }
.legend { fill: #fff; stroke: #fff; stroke-width: .4px; }
.field-label { display: block; margin-top: 51px; font-size: 25px; line-height: 40px; -webkit-text-stroke: .4px #fff; }
.field { width: 1408px; height: 80px; margin-top: 21px; background: #3981b3; border-radius: 8px; }
.manage { position: absolute; right: 0; bottom: 0; display: flex; align-items: center; box-sizing: border-box; width: 296px; height: 90px; padding-left: 51px; gap: 37px; background: #111217; border-radius: 8px 0 18px 0; font-family: "Open Sans", sans-serif; font-weight: 300; font-size: 28px; white-space: nowrap; }
.manage span { position: relative; top: 1px; -webkit-text-stroke: .3px #fff; }
</style>
